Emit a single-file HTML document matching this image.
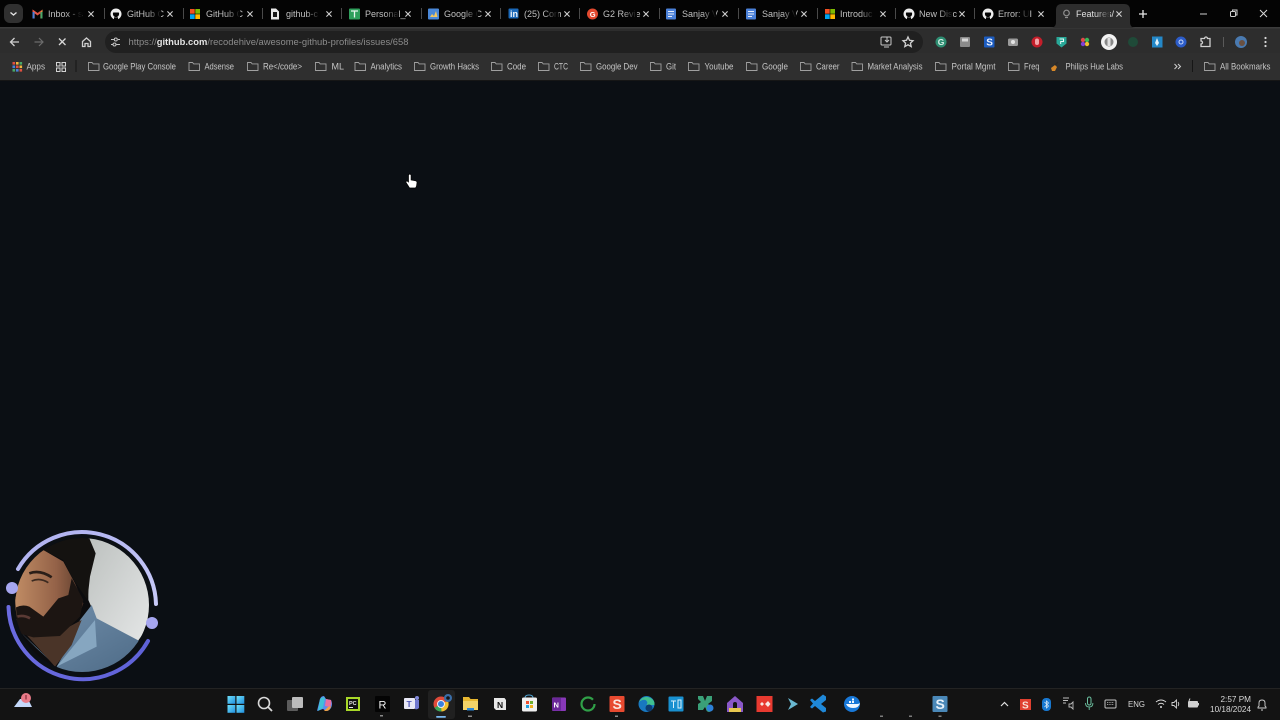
<!DOCTYPE html>
<html lang="en"><head><meta charset="utf-8"><title>Feature</title>
<style>
html,body{margin:0;padding:0;width:1280px;height:720px;overflow:hidden;background:#0b0f14}
svg{display:block;position:absolute;left:0;top:0;filter:blur(.35px)}
text{font-family:"Liberation Sans",sans-serif}
.t{font-size:9px;fill:#c0c0c0}
.b{font-size:9px;fill:#c6c6c6}
.x{stroke:#d0d0d0;stroke-width:1.1;fill:none}
.f{stroke:#a0a0a0;stroke-width:.9;fill:none}
.i{stroke:#d0d0d0;stroke-width:1.3;fill:none}
</style></head><body>
<svg width="1280" height="720" viewBox="0 0 1280 720" xmlns="http://www.w3.org/2000/svg">
<defs>
<linearGradient id="fd"><stop offset="0" stop-color="#040404" stop-opacity="0"/><stop offset="1" stop-color="#040404"/></linearGradient>
<linearGradient id="fa"><stop offset="0" stop-color="#2d2d2d" stop-opacity="0"/><stop offset="1" stop-color="#2d2d2d"/></linearGradient>
<symbol id="cl" overflow="visible"><path class="x" d="M-2.600-2.600L2.600 2.600M2.600-2.600L-2.600 2.600"/></symbol>
<symbol id="fo" overflow="visible"><path class="f" d="M.5 1.500h3.500l1.200 1.400h5.800v6.600h-10.500z"/></symbol>
<symbol id="gh" overflow="visible"><circle r="5.500" fill="#eee"/><circle r="3.100" fill="#040404"/><path d="M-2 5.800v-2.500h4v2.500z" fill="#040404"/><path d="M-3.400-4.500l2 1.500h2.800l2-1.500v3h-6.800z" fill="#eee"/></symbol>
<symbol id="ms" overflow="visible"><rect x="-5" y="-5" width="4.700" height="4.700" fill="#f25022"/><rect x=".3" y="-5" width="4.700" height="4.700" fill="#7fba00"/><rect x="-5" y=".3" width="4.700" height="4.700" fill="#00a4ef"/><rect x=".3" y=".3" width="4.700" height="4.700" fill="#ffb900"/></symbol>
<symbol id="dc" overflow="visible"><rect x="-5" y="-5.500" width="10" height="11" rx="1" fill="#4a80d8"/><path d="M-3-2.500h6M-3 0h6M-3 2.500h4" stroke="#e8eefa" stroke-width="1"/></symbol>
<linearGradient id="ring1" x1="0" y1="0" x2="1" y2="1"><stop offset="0" stop-color="#aeb0f0"/><stop offset="1" stop-color="#c8caf8"/></linearGradient>
<linearGradient id="ring2" x1="0" y1="0" x2="1" y2="0"><stop offset="0" stop-color="#6b6be0"/><stop offset="1" stop-color="#5f62d8"/></linearGradient>
<linearGradient id="wall" x1="0" y1="0" x2="1" y2="1"><stop offset="0" stop-color="#bcc0be"/><stop offset="1" stop-color="#e6e8e8"/></linearGradient>
<linearGradient id="skin" x1="0" y1="0" x2="1" y2="0"><stop offset="0" stop-color="#c08c64"/><stop offset=".6" stop-color="#946248"/><stop offset="1" stop-color="#5c3c2c"/></linearGradient>
<linearGradient id="sw" x1="0" y1="0" x2="1" y2="1"><stop offset="0" stop-color="#7492ae"/><stop offset="1" stop-color="#4d6a86"/></linearGradient>
<linearGradient id="win" x1="0" y1="0" x2="1" y2="1"><stop offset="0" stop-color="#6fe0f8"/><stop offset="1" stop-color="#1f8fe0"/></linearGradient>
<clipPath id="cam"><circle cx="82" cy="605" r="67"/></clipPath>
</defs>

<!-- page -->
<rect width="1280" height="720" fill="#0b0f14"/>

<!-- tab strip -->
<rect width="1280" height="27" fill="#040404"/>
<rect x="4" y="4" width="19" height="19" rx="6" fill="#303030"/>
<path d="M10.500 12.500l3 2.500 3-2.500" stroke="#e4e4e4" stroke-width="1.400" fill="none"/>

<!-- toolbar / bookmarks -->
<rect y="27" width="1280" height="26.500" fill="#2d2d2d"/>
<rect y="27" width="1280" height="1.500" fill="#3c3c3c"/>
<rect y="53" width="1280" height="27" fill="#2f2f2f"/>
<rect y="80" width="1280" height="1" fill="#161616"/>

<!-- active tab -->
<path d="M1050 28q6 0 6-6V10q0-6 6-6h62q6 0 6 6v12q0 6 6 6z" fill="#2d2d2d"/>

<!-- separators -->
<g fill="#4a4a4a"><rect x="104" y="8" width="1" height="11"/><rect x="183" y="8" width="1" height="11"/><rect x="262" y="8" width="1" height="11"/><rect x="341" y="8" width="1" height="11"/><rect x="421" y="8" width="1" height="11"/><rect x="500" y="8" width="1" height="11"/><rect x="579" y="8" width="1" height="11"/><rect x="659" y="8" width="1" height="11"/><rect x="738" y="8" width="1" height="11"/><rect x="817" y="8" width="1" height="11"/><rect x="895" y="8" width="1" height="11"/><rect x="974" y="8" width="1" height="11"/></g>

<!-- tab titles -->
<text class="t" x="48" y="17">Inbox - s</text><rect x="66" y="6" width="16" height="15" fill="url(#fd)"/>
<text class="t" x="127" y="17">GitHub C</text><rect x="147" y="6" width="14" height="15" fill="url(#fd)"/>
<text class="t" x="206" y="17">GitHub C</text><rect x="226" y="6" width="14" height="15" fill="url(#fd)"/>
<text class="t" x="286" y="17">github-c</text><rect x="306" y="6" width="14" height="15" fill="url(#fd)"/>
<text class="t" x="365" y="17">Personal_</text><rect x="385" y="6" width="14" height="15" fill="url(#fd)"/>
<text class="t" x="444" y="17">Google C</text><rect x="464" y="6" width="14" height="15" fill="url(#fd)"/>
<text class="t" x="524" y="17">(25) Com</text><rect x="544" y="6" width="14" height="15" fill="url(#fd)"/>
<text class="t" x="603" y="17">G2 Revie</text><rect x="623" y="6" width="14" height="15" fill="url(#fd)"/>
<text class="t" x="682" y="17">Sanjay V</text><rect x="702" y="6" width="14" height="15" fill="url(#fd)"/>
<text class="t" x="762" y="17">Sanjay V</text><rect x="782" y="6" width="14" height="15" fill="url(#fd)"/>
<text class="t" x="840" y="17">Introduc</text><rect x="860" y="6" width="14" height="15" fill="url(#fd)"/>
<text class="t" x="919" y="17">New Disc</text><rect x="939" y="6" width="14" height="15" fill="url(#fd)"/>
<text class="t" x="998" y="17">Error: UI</text><rect x="1016" y="6" width="14" height="15" fill="url(#fd)"/>
<text class="t" x="1076" y="17" style="fill:#e0e0e0">Features/</text><rect x="1096" y="6" width="14" height="15" fill="url(#fa)"/>

<!-- close icons -->
<use href="#cl" x="91" y="14"/><use href="#cl" x="170" y="14"/><use href="#cl" x="250" y="14"/><use href="#cl" x="329" y="14"/><use href="#cl" x="408" y="14"/><use href="#cl" x="488" y="14"/><use href="#cl" x="567" y="14"/><use href="#cl" x="646" y="14"/><use href="#cl" x="725" y="14"/><use href="#cl" x="804" y="14"/><use href="#cl" x="883" y="14"/><use href="#cl" x="962" y="14"/><use href="#cl" x="1041" y="14"/><use href="#cl" x="1119" y="14"/>

<!-- favicons -->
<path d="M32.500 18.500v-9l5 3.500 5-3.500v9h-2.200v-5l-2.800 2-2.800-2v5z" fill="#d8503f"/><path d="M32.500 9.500l5 3.500v2l-5-3.500z" fill="#e8584a"/><path d="M40.300 13.500l2.200-4v4z" fill="#f2b84a"/><rect x="32.500" y="12" width="2" height="6.500" fill="#4a80d8"/><rect x="40.500" y="12" width="2" height="6.500" fill="#48a868"/>
<use href="#gh" x="116" y="14"/>
<use href="#ms" x="195" y="14"/>
<path d="M271 8.500h5l3 3v8h-8z" fill="#e8e8e8"/><rect x="273" y="12" width="4" height="5" fill="#181818"/>
<rect x="349" y="8.500" width="11" height="11" rx="1" fill="#2fa05c"/><path d="M351 11h7M354.500 11v6.500" stroke="#e8f6ee" stroke-width="1.300"/>
<rect x="428" y="8.500" width="11" height="11" rx="1" fill="#4a88d8"/><path d="M430 17l2-3 2 2 2-5 1.500 6z" fill="#f4c860"/>
<rect x="508.500" y="8.500" width="10" height="10" rx="1" fill="#1a68b8"/><text x="510" y="17" style="font-size:9px;font-weight:bold;fill:#eef4fa">in</text>
<circle cx="592.500" cy="14" r="5.500" fill="#e2492f"/><text x="589.800" y="17" style="font-size:7.500px;font-weight:bold;fill:#fff">G</text>
<use href="#dc" x="671" y="14"/><use href="#dc" x="751" y="14"/>
<use href="#ms" x="830" y="14"/>
<use href="#gh" x="909" y="14"/><use href="#gh" x="988" y="14"/>
<circle cx="1066.500" cy="13" r="2.800" fill="none" stroke="#8f8f8f" stroke-width="1.200"/><path d="M1065 17.500h3" stroke="#8f8f8f" stroke-width="1.200"/>

<!-- new tab, window controls -->
<path d="M1143 10v8M1139 14h8" stroke="#e8e8e8" stroke-width="1.300"/>
<path d="M1200 14h7" stroke="#cfcfcf" stroke-width="1"/>
<rect x="1230.500" y="11.500" width="5" height="5" rx="1" fill="none" stroke="#cfcfcf"/><path d="M1232.500 11.500v-1.500h4.500v5h-1.500" fill="none" stroke="#cfcfcf"/>
<path d="M1260 10l7 7M1267 10l-7 7" stroke="#d8d8d8" stroke-width="1"/>

<!-- nav -->
<path class="i" d="M19 42h-8M14.500 38l-4 4 4 4"/>
<path d="M42.500 42h-8M39 38l4 4-4 4" stroke="#6c6c6c" stroke-width="1.200" fill="none"/>
<path d="M59 38.500l6.500 6.500M65.500 38.500L59 45" stroke="#d8d8d8" stroke-width="1.300" fill="none"/>
<path class="i" d="M82.500 41.500l4-3.500 4 3.500V46.500h-2.500v-3h-3v3h-2.500z"/>
<rect x="105" y="31" width="818" height="22" rx="11" fill="#202020"/>
<path d="M111 39.500h3M118 39.500h2M111 44.500h2M116.500 44.500h3.500" stroke="#c4c4c4" stroke-width="1"/><circle cx="115.800" cy="39.500" r="1.500" fill="none" stroke="#c4c4c4"/><circle cx="114.500" cy="44.500" r="1.500" fill="none" stroke="#c4c4c4"/>
<text x="128.500" y="45.200" textLength="280" lengthAdjust="spacingAndGlyphs" style="font-size:9.300px;fill:#8c8c8c">https://<tspan style="fill:#e4e4e4;font-weight:bold">github.com</tspan>/recodehive/awesome-github-profiles/issues/658</text>
<rect x="881" y="37" width="10" height="8" rx="1" fill="none" stroke="#c8c8c8"/><path d="M884 47h5M887 37v5M885 40l2 2 2-2" stroke="#c8c8c8" fill="none"/>
<path class="i" d="M908 37l1.500 3.300 3.500.4-2.600 2.400.8 3.500-3.200-1.800-3.200 1.800.8-3.500-2.600-2.400 3.500-.4z"/>

<!-- extension icons -->
<circle cx="941" cy="42" r="5.500" fill="#2e8e72"/><text x="937.800" y="45.200" style="font-size:8.500px;font-weight:bold;fill:#d8f0e8">G</text>
<rect x="960" y="37" width="10" height="10" rx="1" fill="#8a8a8a"/><rect x="962" y="38.500" width="6" height="3" fill="#d6d6d6"/>
<rect x="984" y="36.500" width="10.500" height="11" rx="1" fill="#1c5cc0"/><text x="986.300" y="45.500" style="font-size:10px;font-weight:bold;fill:#eef4ff">S</text>
<rect x="1008" y="38.500" width="10" height="7.500" rx="1.500" fill="#9a9a9a"/><circle cx="1013" cy="42" r="2" fill="#e4e4e4"/>
<circle cx="1037" cy="42" r="5.500" fill="#c41e2a"/><rect x="1035" y="38.500" width="4" height="6.500" rx="2" fill="#f0a4a8"/>
<path d="M1056.500 37h10v6.500l-5 4-5-4z" fill="#28a898"/><path d="M1059.500 39h4v2.500h-2.800v2.500" stroke="#e8f8f6" fill="none"/>
<circle cx="1083" cy="40" r="2.200" fill="#e04848"/><circle cx="1087" cy="40" r="2.200" fill="#38b858"/><circle cx="1087" cy="44" r="2.200" fill="#f0c030"/><circle cx="1083" cy="44" r="2.200" fill="#8040d8"/>
<circle cx="1109" cy="42" r="8" fill="#f2f2f2"/><circle cx="1109" cy="42" r="4.500" fill="#888"/><rect x="1107.500" y="38" width="3" height="8" fill="#e0e0e0"/>
<circle cx="1133" cy="42" r="5" fill="#1f4a38"/>
<rect x="1152" y="36.500" width="10.500" height="11" fill="#2488c8"/><path d="M1157 38l2 5-2 3-2-3z" fill="#e4f2fa"/>
<circle cx="1181" cy="42" r="5.500" fill="#2c5cc8"/><circle cx="1181" cy="42" r="2" fill="none" stroke="#c8d8f8"/>
<path class="i" d="M1201 38.500h3.500a1.500 1.500 0 0 1 3 0h2.500v8h-9v-2.500a1.500 1.500 0 0 0 0-3z"/>
<rect x="1223" y="37" width="1" height="10" fill="#5a5a5a"/>
<circle cx="1241" cy="42" r="6" fill="#4a7ab0"/><circle cx="1242" cy="43" r="3" fill="#6a5040"/>
<g fill="#d8d8d8"><circle cx="1265.500" cy="38" r="1.100"/><circle cx="1265.500" cy="42" r="1.100"/><circle cx="1265.500" cy="46" r="1.100"/></g>

<!-- bookmarks -->
<g>
<rect x="12.500" y="62" width="2.600" height="2.600" fill="#e05040"/><rect x="16" y="62" width="2.600" height="2.600" fill="#f0b840"/><rect x="19.500" y="62" width="2.600" height="2.600" fill="#48a868"/>
<rect x="12.500" y="65.500" width="2.600" height="2.600" fill="#4a80d8"/><rect x="16" y="65.500" width="2.600" height="2.600" fill="#e05040"/><rect x="19.500" y="65.500" width="2.600" height="2.600" fill="#f0b840"/>
<rect x="12.500" y="69" width="2.600" height="2.600" fill="#48a868"/><rect x="16" y="69" width="2.600" height="2.600" fill="#4a80d8"/><rect x="19.500" y="69" width="2.600" height="2.600" fill="#e05040"/>
</g>
<text class="b" x="26.500" y="69.500" textLength="18.500" lengthAdjust="spacingAndGlyphs">Apps</text>
<g fill="none" stroke="#d4d4d4" stroke-width="1"><rect x="56.500" y="62.500" width="3.500" height="3.500"/><rect x="62" y="62.500" width="3.500" height="3.500"/><rect x="56.500" y="68" width="3.500" height="3.500"/><rect x="62" y="68" width="3.500" height="3.500"/></g>
<rect x="75.500" y="60" width="1" height="12" fill="#161616"/>

<use href="#fo" x="88" y="61"/><text class="b" x="103" y="69.500" textLength="73" lengthAdjust="spacingAndGlyphs">Google Play Console</text>
<use href="#fo" x="188.500" y="61"/><text class="b" x="204.500" y="69.500" textLength="29.500" lengthAdjust="spacingAndGlyphs">Adsense</text>
<use href="#fo" x="247" y="61"/><text class="b" x="263" y="69.500" textLength="39" lengthAdjust="spacingAndGlyphs">Re&lt;/code&gt;</text>
<use href="#fo" x="315" y="61"/><text class="b" x="331.500" y="69.500">ML</text>
<use href="#fo" x="354.500" y="61"/><text class="b" x="370.500" y="69.500" textLength="31.500" lengthAdjust="spacingAndGlyphs">Analytics</text>
<use href="#fo" x="414" y="61"/><text class="b" x="430" y="69.500" textLength="49" lengthAdjust="spacingAndGlyphs">Growth Hacks</text>
<use href="#fo" x="491" y="61"/><text class="b" x="507" y="69.500" textLength="19" lengthAdjust="spacingAndGlyphs">Code</text>
<use href="#fo" x="538" y="61"/><text class="b" x="554" y="69.500" textLength="14" lengthAdjust="spacingAndGlyphs">CTC</text>
<use href="#fo" x="580" y="61"/><text class="b" x="596" y="69.500" textLength="41.500" lengthAdjust="spacingAndGlyphs">Google Dev</text>
<use href="#fo" x="650" y="61"/><text class="b" x="666" y="69.500" textLength="10" lengthAdjust="spacingAndGlyphs">Git</text>
<use href="#fo" x="688" y="61"/><text class="b" x="704.500" y="69.500" textLength="29" lengthAdjust="spacingAndGlyphs">Youtube</text>
<use href="#fo" x="746" y="61"/><text class="b" x="762" y="69.500" textLength="26" lengthAdjust="spacingAndGlyphs">Google</text>
<use href="#fo" x="800" y="61"/><text class="b" x="816" y="69.500" textLength="23.500" lengthAdjust="spacingAndGlyphs">Career</text>
<use href="#fo" x="851.500" y="61"/><text class="b" x="867.500" y="69.500" textLength="55" lengthAdjust="spacingAndGlyphs">Market Analysis</text>
<use href="#fo" x="935" y="61"/><text class="b" x="951.500" y="69.500" textLength="44" lengthAdjust="spacingAndGlyphs">Portal Mgmt</text>
<use href="#fo" x="1008" y="61"/><text class="b" x="1024" y="69.500" textLength="15.500" lengthAdjust="spacingAndGlyphs">Freq</text>
<path d="M1051 68l4-3 2 2-2 4h-3z" fill="#d88828"/><path d="M1055 65l3-3" stroke="#282828" stroke-width="1.500"/>
<text class="b" x="1065.500" y="69.500" textLength="57.500" lengthAdjust="spacingAndGlyphs">Philips Hue Labs</text>
<path d="M1174.500 64l2.500 2.500-2.500 2.500M1178 64l2.500 2.500-2.500 2.500" fill="none" stroke="#d0d0d0"/>
<rect x="1192" y="60" width="1" height="12" fill="#161616"/>
<use href="#fo" x="1204" y="61"/><text class="b" x="1220" y="69.500" textLength="50.500" lengthAdjust="spacingAndGlyphs">All Bookmarks</text>

<!-- webcam -->
<g clip-path="url(#cam)">
<rect x="15" y="538" width="134" height="135" fill="#0c0c0e"/>
<g transform="translate(0 520) scale(.33333)">
<path d="M265 40H460V300L410 368L290 297L265 240z" fill="url(#wall)"/>
<path d="M60 335L110 385L170 440L200 465H300L385 430L422 365L290 295L275 255L240 300L210 370L170 440z" fill="url(#sw)"/>
<path d="M170 440L215 385L285 300L290 380z" fill="#86a6c0"/>
<path d="M80 345L165 440L215 375L245 300L170 340z" fill="#4a3428"/>
<path d="M45 240L58 175L75 130L130 90L190 125L225 190L250 250L235 290L175 340L80 345L50 300z" fill="url(#skin)"/>
<path d="M48 262Q68 252 88 260L130 290L175 235L205 225L215 175L250 240L240 290L180 348L100 352L65 342L50 310z" fill="#1c1512"/>
<path d="M100 92L170 50L268 55L287 100L270 170L262 240L245 215L215 170L190 120L130 90z" fill="#141210"/>
<path d="M95 183Q120 172 145 188" stroke="#3c2a20" stroke-width="5" fill="none"/>
<path d="M88 160Q120 148 155 172" stroke="#2a1e18" stroke-width="8" fill="none"/>
<path d="M52 290Q70 284 90 295" stroke="#5a3a34" stroke-width="8" fill="none"/>
</g>
</g>
<path d="M18 569A74 74 0 0 1 156 604" fill="none" stroke="url(#ring1)" stroke-width="4" stroke-linecap="round"/>
<path d="M8.500 607A74.500 74.500 0 0 0 148 641" fill="none" stroke="url(#ring2)" stroke-width="4" stroke-linecap="round"/>
<circle cx="12" cy="588" r="6" fill="#a6a6f0"/>
<circle cx="152" cy="623" r="6" fill="#a6a6f0"/>

<!-- cursor -->
<path d="M408.500 175q1.300-2 2.600 0v5l4.500.8q1.600.4 1.400 2l-.5 3.500-1 1.700h-6l-3.500-5.500q-.5-1.500 1.200-1.500l1.300 1z" fill="#fff" stroke="#000" stroke-width=".7"/>

<!-- taskbar -->
<rect y="688" width="1280" height="32" fill="#131313"/>
<rect y="688" width="1280" height="1" fill="#232323"/>

<path d="M14 707l6-8 8 0 4 8z" fill="#c4d8fa"/>
<circle cx="26" cy="698" r="5" fill="#e87a88"/><rect x="25.500" y="695" width="1" height="4.500" fill="#701828"/>

<rect x="428" y="690" width="27" height="29" rx="3" fill="#202020"/>
<rect x="227.500" y="696" width="7.800" height="7.800" fill="url(#win)"/><rect x="236.500" y="696" width="7.800" height="7.800" fill="url(#win)"/><rect x="227.500" y="705" width="7.800" height="7.800" fill="url(#win)"/><rect x="236.500" y="705" width="7.800" height="7.800" fill="url(#win)"/>
<circle cx="264" cy="703" r="5.500" fill="none" stroke="#d8d8d8" stroke-width="1.600"/><path d="M268 707l4 4" stroke="#d8d8d8" stroke-width="1.800"/>
<rect x="287" y="700" width="11" height="11" rx="1" fill="#5c5c5c"/><rect x="292" y="697" width="11" height="11" rx="1" fill="#bcbcbc"/>
<path d="M317 711l3-12q1-3 4-3l2 3 5 1q2 4 0 8-2 3-5 3l-3-2z" fill="#5a8cf0"/><path d="M320 699q3-3 5-1l-2 10-5 3z" fill="#40c0d8"/><path d="M326 699l5 1q1 4-1 7l-5-1z" fill="#e870a0"/><path d="M324 711l4-4 3-1q-1 5-5 5z" fill="#f0a040"/>
<rect x="346" y="697" width="14" height="14" fill="#a8d828"/><rect x="348" y="699" width="10" height="10" fill="#101010"/><text x="349" y="705" style="font-size:5.500px;font-weight:bold;fill:#e8e8e8">PC</text><rect x="349" y="707" width="4" height="1" fill="#e8e8e8"/>
<rect x="375" y="696" width="15" height="16" rx="1" fill="#040404"/><text x="378.500" y="708.500" style="font-size:11px;fill:#eee">R</text><rect x="380" y="715" width="3" height="1.500" fill="#8a8a8a"/>
<rect x="404" y="698" width="11" height="11" rx="1" fill="#e8e8f6"/><text x="406.500" y="707" style="font-size:8.500px;font-weight:bold;fill:#5058b8">T</text><path d="M415 700h4v8q-2 2-4 1z" fill="#7078d0"/><circle cx="417" cy="698" r="2" fill="#8088d8"/>
<circle cx="441" cy="704" r="7.500" fill="#e04a3a"/><path d="M441 704l-6.500 3.800a7.500 7.500 0 0 0 7 3.700z" fill="#38a858"/><path d="M441 704l7-3a7.500 7.500 0 0 1-6.500 10.500z" fill="#f0c030"/><circle cx="441" cy="704" r="3.500" fill="#3a80e0" stroke="#f0f0f0"/><circle cx="448" cy="698" r="4" fill="#3a6ea8"/><circle cx="448" cy="698" r="1.800" fill="#141414"/><rect x="436" y="716" width="10" height="1.800" rx="1" fill="#78b8f0"/>
<path d="M463 697h6l1.500 2h7.500v11h-15z" fill="#e8b830"/><rect x="463" y="701" width="15" height="9" fill="#f4d468"/><rect x="467" y="708" width="7" height="2.500" fill="#2c88d8"/><rect x="468" y="715.500" width="4" height="1.500" fill="#8a8a8a"/>
<path d="M494 698h10.500l1.500 2v10h-10l-2-2z" fill="#e8e8e8"/><text x="497" y="708" style="font-size:8.500px;font-weight:bold;fill:#141414">N</text>
<path d="M525 698q0-3 4-3t4 3" fill="none" stroke="#50a8d8"/><rect x="522" y="697.500" width="15" height="14" rx="1.500" fill="#f0f0f0"/><rect x="526" y="701" width="3" height="3" fill="#f05030"/><rect x="530" y="701" width="3" height="3" fill="#70b030"/><rect x="526" y="705" width="3" height="3" fill="#20a0e0"/><rect x="530" y="705" width="3" height="3" fill="#f0b020"/>
<rect x="552" y="697.500" width="14" height="13.500" rx="1" fill="#8838b8"/><rect x="552" y="698" width="9" height="12.500" fill="#6a2898"/><text x="553.500" y="707.500" style="font-size:7.500px;font-weight:bold;fill:#fff">N</text>
<circle cx="588" cy="704" r="6.500" fill="none" stroke="#30a048" stroke-width="2.200" stroke-dasharray="36 5"/>
<rect x="609.500" y="696" width="15" height="16" rx="1" fill="#e84a30"/><text x="612.500" y="709" style="font-size:14px;font-weight:bold;fill:#fbe6e0">S</text><rect x="615" y="715.500" width="3" height="1.500" fill="#8a8a8a"/>
<circle cx="646.500" cy="704" r="8" fill="#1878c0"/><path d="M639 702q3-6 9-5 7 2 6.500 8h-8q2-3-1-5-3-1-6.500 2z" fill="#40c090"/><circle cx="649" cy="708" r="3.500" fill="#0c3c70"/>
<rect x="668.500" y="696.500" width="15" height="15" rx="1" fill="#1890d0"/><path d="M671 701h5M673.500 701v7M678 700h3v8h-3z" stroke="#d8f0fa" fill="none"/>
<path d="M698 696h5l2 5 2-5h5v5l-4 3 4 3v2a3 3 0 1 1-6 0l-1-2-2 3h-5v-6l3-2-3-3z" fill="#3aa078"/><circle cx="710" cy="708" r="3.500" fill="#2c80d8"/>
<path d="M727 703l8-7 8 7v9h-16z" fill="#8a58c8"/><path d="M733 708v-4a2 2 0 0 1 4 0v4z" fill="#141414"/><rect x="729" y="708" width="12" height="4" fill="#e8c850"/>
<rect x="756.500" y="696" width="16" height="16" fill="#e83a30"/><path d="M760 704l2-2 2 2-2 2zM765 704l3-3 2.500 3-2.500 3z" fill="#f8e8e4"/>
<path d="M788 698l10 6-10 6 3-6z" fill="#6ab8d0"/>
<path d="M826 696.500v15l-3 1-8-6.500-3 2.500-2-1.500 3-3.500-3-3.500 2-1.500 3 2.500 8-6.500z" fill="#1f88d8"/><path d="M826 700v8l-5-4z" fill="#131313"/>
<circle cx="852" cy="704" r="8" fill="#1878d8"/><path d="M846 704h11q2 0 3-1-1 5-7 5-5 0-7-4z" fill="#f2f8ff"/><rect x="849" y="701" width="2" height="2" fill="#f2f8ff"/><rect x="852" y="701" width="2" height="2" fill="#f2f8ff"/><rect x="852" y="698.500" width="2" height="2" fill="#f2f8ff"/>
<rect x="932.500" y="696" width="15" height="16" rx="1" fill="#4a88b8"/><text x="935.500" y="709" style="font-size:14px;font-weight:bold;fill:#e8f2fa">S</text>
<g fill="#7c7c7c"><rect x="880" y="715.500" width="3" height="1.500"/><rect x="909" y="715.500" width="3" height="1.500"/><rect x="938.500" y="715.500" width="3" height="1.500"/></g>

<!-- tray -->
<path d="M1001 706l3.500-3.500 3.500 3.500" fill="none" stroke="#e0e0e0" stroke-width="1.200"/>
<rect x="1020" y="699" width="11" height="11" fill="#e04030"/><text x="1022" y="708.500" style="font-size:10px;font-weight:bold;fill:#f8e0d8">S</text>
<rect x="1042" y="698" width="9" height="13" rx="4" fill="#1878d0"/><path d="M1044.500 702l4 4-2 2v-7l2 2-4 4" fill="none" stroke="#e8f2fa" stroke-width=".7"/>
<path d="M1063 698h6M1063 700.500h5M1063 703h3" stroke="#bcbcbc" stroke-width=".9"/><path d="M1069 704h2l2-2v7l-2-2h-2z" fill="none" stroke="#bcbcbc" stroke-width=".9"/>
<rect x="1087.500" y="697" width="3.500" height="8" rx="1.700" fill="none" stroke="#6cc0a0"/><path d="M1085.500 703q0 4 3.700 4t3.700-4M1089.200 707v3" fill="none" stroke="#6cc0a0" stroke-width=".9"/>
<rect x="1105" y="700" width="11" height="8" rx="1" fill="none" stroke="#c4c4c4"/><path d="M1107 702.500h7M1107 704.500h7" stroke="#c4c4c4" stroke-width=".8" stroke-dasharray="1 .7"/>
<text x="1128" y="707" style="font-size:7.800px;fill:#d8d8d8">ENG</text>
<path d="M1156 702q5-4 10 0M1158 704.500q3-2.500 6 0" fill="none" stroke="#dcdcdc"/><circle cx="1161" cy="707" r="1" fill="#dcdcdc"/>
<path d="M1172 702.500h2l2.500-2.500v8l-2.500-2.500h-2z" fill="none" stroke="#d0d0d0" stroke-width=".9"/><path d="M1178 702q1.500 2 0 4" fill="none" stroke="#d0d0d0" stroke-width=".9"/>
<rect x="1188" y="701" width="10" height="6.500" rx="1" fill="#d0d0d0"/><rect x="1198" y="703" width="1" height="2.500" fill="#d0d0d0"/><path d="M1189 701l1-2.500" stroke="#d0d0d0"/>
<text x="1251" y="702" text-anchor="end" style="font-size:8.200px;fill:#d8d8d8">2:57 PM</text>
<text x="1251" y="712" text-anchor="end" style="font-size:8.200px;fill:#d8d8d8">10/18/2024</text>
<path d="M1258 708v-1l1-1v-3q0-3 3-3t3 3v3l1 1v1zM1261 710h2" fill="none" stroke="#d0d0d0" stroke-width=".9"/>
</svg>
</body></html>
